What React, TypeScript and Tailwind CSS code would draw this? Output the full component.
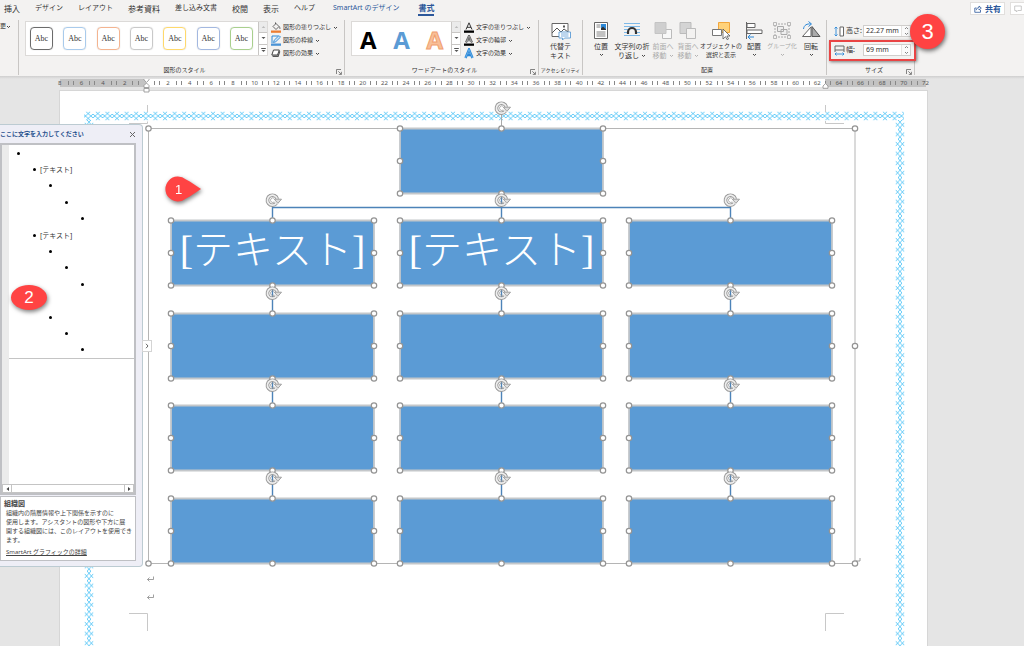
import type { ReactNode } from "react";

const tabs = [
  { name: "挿入", size: "text-[8px]" },
  { name: "デザイン", size: "text-[7px]" },
  { name: "レイアウト", size: "text-[7px]" },
  { name: "参考資料", size: "text-[8px]" },
  { name: "差し込み文書", size: "text-[7px]" },
  { name: "校閲", size: "text-[8px]" },
  { name: "表示", size: "text-[8px]" },
  { name: "ヘルプ", size: "text-[7px]" },
];

const swatches = [
  "border-[#6b6b6b]",
  "border-[#a9cbec]",
  "border-[#f4b490]",
  "border-[#c9c9c9]",
  "border-[#ffd96b]",
  "border-[#a3b8e0]",
  "border-[#a9d08e]",
];

// -8 .. 72, every second mark carries a number
const marks = Array.from({ length: 41 }, (_, i) => i * 2 - 8);

const columns = [171, 400, 629];
const rows = [220, 313, 405, 498];
const NODE_W = 203;
const NODE_H = 66;
const PAGE_X = 60;
const PAGE_Y = 91;

const nodes = [
  { x: 400, y: 128, text: "" },
  ...rows.flatMap((y, r) =>
    columns.map((x, c) => ({ x, y, text: r === 0 && c < 2 ? "[テキスト]" : "" }))
  ),
];

const outline = [
  { level: 0, text: "" },
  { level: 1, text: "[テキスト]" },
  { level: 2, text: "" },
  { level: 3, text: "" },
  { level: 4, text: "" },
  { level: 1, text: "[テキスト]" },
  { level: 2, text: "" },
  { level: 3, text: "" },
  { level: 4, text: "" },
  { level: 1, text: "" },
  { level: 2, text: "" },
  { level: 3, text: "" },
  { level: 4, text: "" },
];

function Chevron() {
  return (
    <svg className="shrink-0" width="5" height="4" viewBox="0 0 5 4" fill="none" stroke="currentColor" strokeWidth="0.9">
      <path d="M1 1l1.5 1.5L4 1" />
    </svg>
  );
}

function Launcher() {
  return (
    <button aria-label="詳細" className="absolute right-[2px] bottom-0">
      <svg width="6" height="6" viewBox="0 0 6 6" fill="none" stroke="#666" strokeWidth="0.8">
        <path d="M.5 5V.5H5M2.3 2.3l3 3M5.4 2.8v2.6H2.8" />
      </svg>
    </button>
  );
}

function Group({ label, className, launcher, small, children }: { label: string; className: string; launcher?: boolean; small?: boolean; children: ReactNode }) {
  return (
    <section className={`relative flex shrink-0 flex-col border-r border-[#c8c6c4] ${className}`}>
      <div className="flex h-[43px] shrink-0 items-start">{children}</div>
      <h2 className={`text-center leading-[12px] whitespace-nowrap ${small ? "text-[5px]" : "text-[6px]"}`}>{label}</h2>
      {launcher && <Launcher />}
    </section>
  );
}

function GalleryScroll() {
  return (
    <div className="flex h-full w-[9px] flex-col border-l border-[#c8c6c4] text-[#555]">
      <button aria-label="上へ" className="flex flex-1 items-center justify-center bg-[#ebebeb] text-[#bbb]">
        <svg width="5" height="4" viewBox="0 0 5 4" fill="currentColor"><path d="M.7 3h3.6L2.5 1z" /></svg>
      </button>
      <button aria-label="下へ" className="flex flex-1 items-center justify-center border-y border-[#c8c6c4]">
        <svg width="5" height="4" viewBox="0 0 5 4" fill="currentColor"><path d="M.5 1h4l-2 2z" /></svg>
      </button>
      <button aria-label="その他" className="flex flex-1 items-center justify-center">
        <svg width="5" height="6" viewBox="0 0 5 6" fill="currentColor"><path d="M.2 1h4.6v.9H.2zM.5 3h4l-2 2z" /></svg>
      </button>
    </div>
  );
}

function MenuButton({ icon, label }: { icon: ReactNode; label: string }) {
  return (
    <button className="flex h-[13px] items-center text-[6px] whitespace-nowrap">
      <svg className="mr-[2px]" width="10" height="11" viewBox="0 0 10 11" fill="none">{icon}</svg>
      {label}
      <span className="ml-[2px]"><Chevron /></span>
    </button>
  );
}

function BigButton({ icon, lines, className, arrow, off, size }: { icon: ReactNode; lines: string[]; className: string; arrow?: boolean; off?: boolean; size?: string }) {
  return (
    <button disabled={off} className={`flex shrink-0 flex-col items-center leading-[9px] whitespace-nowrap ${size ?? "text-[7px]"} ${off ? "text-[#aaa]" : ""} ${className}`}>
      <svg className="mb-px" width="20" height="20" viewBox="0 0 20 20" fill="none">{icon}</svg>
      {lines.map((line, i) => (
        <span key={line} className="flex items-center gap-[2px]">
          {line}
          {arrow && lines.length > 1 && i === lines.length - 1 && <Chevron />}
        </span>
      ))}
      {arrow && lines.length === 1 && <span className="pt-[2px]"><Chevron /></span>}
    </button>
  );
}

function SizeField({ id, label, value, icon }: { id: string; label: string; value: string; icon: ReactNode }) {
  return (
    <div className="flex h-[12px] items-center">
      <svg width="11" height="11" viewBox="0 0 11 11" fill="none">{icon}</svg>
      <label htmlFor={id} className="w-[18px] pl-px text-[7px] whitespace-nowrap">{label}</label>
      <div className="flex h-[12px] w-[48px] border border-[#d0cecc] bg-white">
        <input id={id} defaultValue={value} className="w-[37px] bg-transparent pl-[2px] text-[7px] outline-none" />
        <div className="flex flex-1 flex-col items-center justify-between border-l border-[#e6e4e2] bg-[#fafafa] text-[#777]">
          <button aria-label={`${label}増`} className="rotate-180"><Chevron /></button>
          <button aria-label={`${label}減`}><Chevron /></button>
        </div>
      </div>
    </div>
  );
}

function Ribbon() {
  return (
    <header className="relative z-20 bg-[#f3f2f1] text-[#333]">
      <nav className="flex h-[18px] items-start justify-between">
        <div className="flex gap-[15px] pl-1">
          {tabs.map((tab) => (
            <button key={tab.name} className={`h-[17px] whitespace-nowrap ${tab.size}`}>{tab.name}</button>
          ))}
          <button className="ml-[3px] h-[17px] text-[7px] whitespace-nowrap text-[#2b579a]">SmartArt のデザイン</button>
          <button className="ml-1 h-[16px] border-b-2 border-[#2b579a] pt-[2px] text-[8px] leading-none font-bold text-[#2b579a]">書式</button>
        </div>
        <div className="flex gap-[5px] pt-[2px]">
          <button className="flex h-[13px] w-[35px] items-center justify-center gap-[3px] border border-[#e1dfdd] bg-white text-[8px] font-bold text-[#2b579a]">
            <svg width="8" height="8" viewBox="0 0 8 8" fill="none" stroke="#2b579a" strokeWidth="0.8">
              <path d="M2.5 3H.8v4.3h5.7V5M2.2 5.2C2.5 3.4 3.7 2.6 5 2.6V1l2.3 2.1L5 5V3.8" />
            </svg>
            共有
          </button>
          <button aria-label="コメント" className="flex h-[13px] w-[14px] items-center justify-center border border-r-0 border-[#e1dfdd] bg-white">
            <svg width="8" height="8" viewBox="0 0 8 8" fill="none" stroke="#bbb" strokeWidth="0.8">
              <path d="M.7 1h6.6v4.5H3.8L2.3 7V5.5H.7z" />
            </svg>
          </button>
        </div>
      </nav>

      <div className="flex h-[58px] pt-[2px]">
        <div className="flex h-[55px] w-[19px] border-r border-[#c8c6c4]">
          <button className="flex h-[13px] items-center text-[6px]">
            更
            <Chevron />
          </button>
        </div>

        <Group label="図形のスタイル" className="h-[55px] w-[326px] pt-px pl-[6px]" launcher>
          <div className="flex h-[35px] w-[243px] border border-[#dcdad8] bg-white">
            <div className="flex flex-1 items-center justify-between pr-[5px] pl-1">
              {swatches.map((border) => (
                <button key={border} className={`h-[23px] w-[23px] rounded-[4px] border font-['Liberation_Serif',serif] text-[8px] leading-none shadow-[0_0_1px_rgba(0,0,0,0.25)] ${border}`}>Abc</button>
              ))}
            </div>
            <GalleryScroll />
          </div>
          <div className="flex flex-col pl-[3px]">
            <MenuButton label="図形の塗りつぶし" icon={<><path d="M2 4.5L5 1.5l3 3-3 3zM4.5 2V.4M8 4.5c1 1 1.2 2 .6 2.5" stroke="#444" strokeWidth=".8" /><path d="M0 8.5h10v2.3H0z" fill="#ed7d31" /></>} />
            <MenuButton label="図形の枠線" icon={<><path d="M1 8V1h6" stroke="#2b88d8" /><path d="M2.5 7.5l.7-2.3L8 .6l1.5 1.5-4.7 4.6z" stroke="#2b88d8" strokeWidth=".9" fill="#cfe4f7" /><path d="M0 8.5h10v2.3H0z" fill="#4a93d6" /></>} />
            <MenuButton label="図形の効果" icon={<><path d="M2.5 2h5.8L6.5 7H.8z" fill="#fff" stroke="#444" /><path d="M8.5 2.5l.8 1.3L7.5 9H2L.8 7.5h5.9z" fill="#555" /></>} />
          </div>
        </Group>

        <Group label="ワードアートのスタイル" className="h-[55px] w-[194px] pt-px pl-[6px]" launcher>
          <div className="flex h-[35px] w-[110px] border border-[#dcdad8] bg-white">
            <div className="flex flex-1 items-center justify-between px-2 pt-[2px] font-['Open_Sans',sans-serif] text-[24px] leading-none font-bold">
              <button className="text-black">A</button>
              <button className="text-[#5b9bd5]">A</button>
              <button className="text-[#f8bf98] [-webkit-text-stroke:1px_#f0a070]">A</button>
            </div>
            <GalleryScroll />
          </div>
          <div className="flex flex-col pl-[3px]">
            <MenuButton label="文字の塗りつぶし" icon={<><path d="M2 7.5L5 .8l3 6.7M3 5.3h4" stroke="#333" /><path d="M0 8.5h10v2.3H0z" fill="#000" /></>} />
            <MenuButton label="文字の輪郭" icon={<><path d="M2 7.5L5 .8l3 6.7M3 5.3h4" stroke="#555" strokeWidth="2" /><path d="M2 7.5L5 .8l3 6.7M3 5.3h4" stroke="#ddd" strokeWidth=".5" /><path d="M0 8.5h10v2.3H0z" fill="#000" /></>} />
            <MenuButton label="文字の効果" icon={<><path d="M1.5 10L5 1.5 8.5 10M2.7 7h4.6" stroke="#2b88d8" strokeWidth="2.4" /><path d="M1.5 10L5 1.5 8.5 10" stroke="#9fd0f5" strokeWidth=".5" /></>} />
          </div>
        </Group>

        <Group label="アクセシビリティ" className="h-[55px] w-[44px] pt-px" small>
          <BigButton className="w-full" lines={["代替テ", "キスト"]} icon={<><path d="M1 2.5h16v13H1z" fill="#fff" stroke="#666" /><path d="M1 12l5-5 4 4 3-3 4 3" stroke="#555" /><path d="M12 4.5h2v2h-2z" fill="#555" /><path d="M8 11h11.5v6h-6l-2 2v-2H8z" fill="#fff" stroke="#5b9bd5" strokeWidth=".9" /><path d="M10 13h7.5M10 15h7.5" stroke="#5b9bd5" strokeWidth=".8" /></>} />
        </Group>

        <Group label="配置" className="h-[55px] w-[244px] pt-px pl-[5px]">
          <BigButton className="w-[26px]" arrow lines={["位置"]} icon={<><path d="M3.5 1.5h13v16h-13z" fill="#fff" stroke="#666" /><path d="M5.5 4h4M5.5 6h4M5.5 11h9M5.5 13h9M5.5 15h9" stroke="#777" strokeWidth=".9" /><path d="M10 3h5v6h-5z" fill="#2b88d8" /><path d="M10 9V7.5l2-2 3 3V9z" fill="#333" /></>} />
          <BigButton className="w-[36px]" arrow lines={["文字列の折", "り返し"]} icon={<><path d="M2 2.5h16M2 5.5h16M2 8.5h4M14 8.5h4M2 11.5h3M15 11.5h3M2 14.5h16" stroke="#7db9e8" /><path d="M6 13V11a4 4 0 018 0v2" stroke="#333" strokeWidth="2.2" fill="#f3f2f1" /></>} />
          <BigButton className="w-[26px]" arrow off lines={["前面へ", "移動"]} icon={<><path d="M9.5 8.5h9v9h-9z" fill="#f8f8f8" stroke="#bbb" /><path d="M2 1.5h11v11H2z" fill="#cfcfcf" stroke="#c4c4c4" /></>} />
          <BigButton className="w-[24px]" arrow off lines={["背面へ", "移動"]} icon={<><path d="M2 1.5h11v11H2z" fill="#d4d4d4" stroke="#bbb" /><path d="M8.5 7.5h9v10h-9z" fill="#f3f2f1" stroke="#bbb" /></>} />
          <BigButton className="w-[42px]" size="text-[6px]" lines={["オブジェクトの", "選択と表示"]} icon={<><path d="M7.5 1.5h11v10h-11z" fill="#ffd27a" stroke="#f2a63b" /><path d="M1.5 8.5h9v6h-9z" fill="#fff" stroke="#777" /><path d="M12 8v10l2.5-2.3 1.7 3 1.3-.7-1.6-3H19z" fill="#fff" stroke="#555" strokeWidth=".8" /></>} />
          <BigButton className="w-[24px]" arrow lines={["配置"]} icon={<><path d="M2.5 1v17" stroke="#666" /><path d="M3 2.5h8v4H3zM3 9h15v3.5H3z" fill="#fff" stroke="#666" /><path d="M10 16H4M6.5 13.5L4 16l2.5 2.5" stroke="#2b88d8" /></>} />
          <BigButton className="w-[32px]" size="text-[6px]" arrow off lines={["グループ化"]} icon={<><path d="M3 3h14v13H3z" stroke="#aaa" strokeDasharray="2 1" /><path d="M5.5 5.5h6v5h-6zM9 8.5h6v5H9z" stroke="#aaa" fill="#eee" /><path d="M1.5 1.5h3v3h-3zM15.5 1.5h3v3h-3zM1.5 14.5h3v3h-3zM15.5 14.5h3v3h-3z" fill="#f3f2f1" stroke="#aaa" strokeWidth=".8" /></>} />
          <BigButton className="w-[26px]" arrow lines={["回転"]} icon={<><path d="M1.5 15.5H10V6z" fill="#fff" stroke="#666" /><path d="M11 15.5V5.5l8 10z" fill="#aaa" stroke="#555" /><path d="M2.5 8C3 4 6 2.5 10 3M7.5.5l3 2.5-3 2.5" stroke="#2b88d8" /></>} />
        </Group>

        <Group label="サイズ" className="h-[55px] w-[88px] pt-px pl-[7px]" launcher>
          <div className="flex flex-col gap-[7px] pt-1">
            <SizeField id="height" label="高さ:" value="22.27 mm" icon={<><path d="M2 1v9M.5 2.5L2 1l1.5 1.5M.5 8.5L2 10l1.5-1.5" stroke="#2b88d8" strokeWidth=".9" /><path d="M6 1h3.5v9H6z" stroke="#666" fill="#fff" /></>} />
            <SizeField id="width" label="幅:" value="69 mm" icon={<><path d="M1 1h9v4H1zM1 5v2M10 5v2" stroke="#666" /><path d="M1 9h9M2.5 7.5L1 9l1.5 1.5M8.5 7.5L10 9l-1.5 1.5" stroke="#2b88d8" strokeWidth=".9" /></>} />
          </div>
        </Group>
      </div>
      <div className="absolute top-full left-0 h-[3px] w-full bg-linear-to-b from-[#cfcfcf] to-[#e5e5e5]" />

      <div className="absolute top-[40px] left-[829px] h-[21px] w-[87px] border-2 border-[#e94444] shadow-[1px_1px_3px_rgba(0,0,0,0.5)]" />
      <span className="absolute top-[14px] left-[910px] flex h-[35px] w-[35px] items-center justify-center rounded-full bg-[#ff4343] font-['Liberation_Sans',sans-serif] text-[22px] text-white shadow-[1px_2px_4px_rgba(0,0,0,0.55)]">3</span>
    </header>
  );
}

function Ruler() {
  return (
    <div className="relative mt-[3px] h-[8px] w-[936px] shrink-0 overflow-hidden pl-[49px]">
      <div className="absolute inset-y-0 left-[60px] w-[866px] border-r-[101px] border-l-[86px] border-[#c3c3c3] bg-white" />
      <div className="relative flex h-full items-center text-[6px] leading-none text-[#555]">
        {marks.map((n) => (
          <span key={n} className="flex flex-1 items-center justify-around">
            <i className={n === -8 ? "w-px" : "h-1 w-px bg-[#888]"} />
            <span className="w-[7px] text-center">{n === 0 ? "" : Math.abs(n)}</span>
            <i className={n === 72 ? "w-px" : "h-1 w-px bg-[#888]"} />
          </span>
        ))}
      </div>
    </div>
  );
}

function Rotate({ x, y }: { x: number; y: number }) {
  return (
    <g transform={`translate(${x} ${y})`} fill="none">
      <path d="M3.8 3.4A5 5 0 114.8-1" stroke="#999" strokeWidth="3.6" />
      <path d="M3.8 3.4A5 5 0 114.8-1" stroke="#eee" strokeWidth="1.7" />
      <path d="M1.8-.8h7.2L5.4 3.4z" fill="#ddd" stroke="#999" strokeWidth=".9" />
      <path d="M1.8 1.9A2.3 2.3 0 111.5-1.8" stroke="#999" strokeWidth=".8" />
    </g>
  );
}

function Handle({ x, y }: { x: number; y: number }) {
  return <circle cx={x} cy={y} r="2.7" fill="#fff" stroke="#949494" strokeWidth="1.2" />;
}

function Selection() {
  return (
    <svg className="absolute top-0 left-0" width="867" height="555" viewBox="60 91 867 555" fill="none">
      {nodes.map(({ x, y }) => {
        const mid = x + NODE_W / 2;
        const top = y + 0.5;
        const bottom = y + NODE_H - 0.5;
        return (
          <g key={`${x}-${y}`}>
            <path d={`M${x} ${top}h${NODE_W}V${bottom}H${x}z`} stroke="#c4c7ca" strokeWidth="1.8" />
            {y === 128 && <path d={`M${mid} 112V${top}`} stroke="#aaa" />}
            {[x, mid, x + NODE_W].map((hx) => <Handle key={hx} x={hx} y={top} />)}
            <Handle x={x} y={y + NODE_H / 2} />
            <Handle x={x + NODE_W} y={y + NODE_H / 2} />
            {[x, mid, x + NODE_W].map((hx) => <Handle key={hx} x={hx} y={bottom} />)}
          </g>
        );
      })}
      {nodes.map(({ x, y }) => (
        <Rotate key={`${x}-${y}`} x={x + NODE_W / 2} y={y - 20} />
      ))}
      <Handle x={148.5} y={128.5} />
      <Handle x={855} y={128.5} />
      <Handle x={855} y={346} />
      <Handle x={148.5} y={563.5} />
      <Handle x={855} y={563.5} />
    </svg>
  );
}

function PageArt() {
  return (
    <svg className="absolute top-0 left-0" width="867" height="555" viewBox="60 91 867 555" fill="none">
      <defs>
        <pattern id="stitch-h" x="93" y="111" width="9.6" height="10" patternUnits="userSpaceOnUse">
          <path d="M2.8.8L9.6 6.9M6.8.8L0 6.9M2.8 9.2L9.6 3.1M6.8 9.2L0 3.1" stroke="#45c1f7" strokeWidth=".8" />
        </pattern>
        <pattern id="stitch-v" x="0" y="120" width="10" height="9.6" patternUnits="userSpaceOnUse">
          <path d="M.8 2.8L6.9 9.6M.8 6.8L6.9 0M9.2 2.8L3.1 9.6M9.2 6.8L3.1 0" stroke="#45c1f7" strokeWidth=".8" />
        </pattern>
      </defs>
      <rect x="84" y="111" width="820" height="10" fill="url(#stitch-h)" />
      <g transform="translate(84 0)"><rect x="0" y="120" width="10" height="530" fill="url(#stitch-v)" /></g>
      <g transform="translate(895 0)"><rect x="0" y="120" width="10" height="530" fill="url(#stitch-v)" /></g>
      <path d="M147.5 105v7M129 123.5h18.5v-2M825.5 105v7M825.5 121v2.5H844M129 613.5h18.5V631M844 613.5h-18.5V631" stroke="#c8c8c8" />
      <path d="M148.5 128.5H855v435H148.5z" stroke="#b5b5b5" />
      <g stroke="#4d83b8" strokeWidth="1.4">
        <path d="M272.5 220v-12.5h458V220M501.5 194v26" />
        {columns.map((x) => <path key={x} d={`M${x + 101.5} 286V498`} />)}
      </g>
      <g stroke="#888" strokeWidth=".8">
        <path d="M153.5 576.5v3h-6M149.5 577.5l-2 2 2 2M153.5 594.5v3h-6M149.5 595.5l-2 2 2 2M860 558v3h-4" />
      </g>
    </svg>
  );
}

function TextPane() {
  return (
    <aside className="absolute top-[37px] left-0 z-10 flex h-[443px] w-[143px] flex-col rounded-r-[4px] border border-l-0 border-[#bccbd2] bg-[#eeeef6] pr-[6px] pb-[5px]">
      <div className="flex h-[18px] items-center justify-between">
        <h2 className="text-[6px] font-bold whitespace-nowrap text-[#1f4e8c]">ここに文字を入力してください</h2>
        <button aria-label="閉じる">
          <svg width="7" height="7" viewBox="0 0 7 7" stroke="#666" strokeWidth="1"><path d="M1 1l5 5M6 1L1 6" /></svg>
        </button>
      </div>
      <div className="flex flex-1 flex-col border-2 border-[#bfc0c4] bg-white">
        <div className="flex flex-1 flex-col border-l-[7px] border-[#ebebeb]">
          <ul className="flex h-[214px] flex-col border-b border-[#c4c4c4] pl-2 text-[7px] leading-none text-[#333]">
            {outline.map((item, i) => (
              <li key={i} className="flex flex-1 items-center gap-1" style={{ paddingLeft: item.level * 16 }}>
                <span className="size-[3px] rounded-full bg-black" />
                {item.text}
              </li>
            ))}
          </ul>
        </div>
        <div className="flex h-[9px] justify-between border border-[#c4c4c4]">
          <button aria-label="左へ" className="flex w-[9px] items-center justify-center border-r border-[#c4c4c4]">
            <svg width="3" height="4" viewBox="0 0 3 4" fill="#444"><path d="M3 0v4L.5 2z" /></svg>
          </button>
          <button aria-label="右へ" className="flex w-[9px] items-center justify-center border-l border-[#c4c4c4]">
            <svg width="3" height="4" viewBox="0 0 3 4" fill="#444"><path d="M0 0v4l2.5-2z" /></svg>
          </button>
        </div>
      </div>
      <div className="mt-px h-[65px] border border-[#bfc0c4] bg-white pt-[2px] pl-[3px] text-[6px] leading-[9px] whitespace-nowrap text-[#444]">
        <h3 className="text-[7px] font-bold">組織図</h3>
        <p className="pt-px pl-[2px]">
          組織内の階層情報や上下関係を示すのに<br />
          使用します。アシスタントの図形や下方に展<br />
          開する組織図には、このレイアウトを使用でき<br />
          ます。
        </p>
        <a href="#details" className="mt-[3px] ml-[2px] block underline">SmartArt グラフィックの詳細</a>
      </div>
    </aside>
  );
}

export default function App() {
  return (
    <div className="flex h-screen flex-col overflow-hidden bg-[#e5e5e5] font-['Noto_Sans','Noto_Sans_CJK_JP',sans-serif]">
      <Ribbon />
      <Ruler />

      <main className="relative flex-1 pt-1">
        <div className="relative ml-[60px] h-full w-[867px] bg-white shadow-[0_0_0_1px_#d6d6d6]">
          <PageArt />
          {nodes.map((node) => (
            <div
              key={`${node.x}-${node.y}`}
              className="absolute flex h-[66px] w-[203px] items-center justify-center bg-[#5b9bd5] pb-1 font-['Liberation_Serif','Noto_Sans_CJK_JP',serif] text-[40px] leading-none font-light whitespace-nowrap text-white"
              style={{ left: node.x - PAGE_X, top: node.y - PAGE_Y }}
            >
              {node.text}
            </div>
          ))}
          <Selection />
        </div>

        <svg className="absolute -top-[10px] left-[143px]" width="7" height="17" viewBox="0 0 7 17" fill="#fff" stroke="#999" strokeWidth=".9">
          <path d="M1 .8h5v2L3.5 5.5 1 2.8zM3.5 6L6 8.5v2H1v-2zM1 11.5h5v3.5H1z" />
        </svg>
        <svg className="absolute -top-1 left-[822px]" width="7" height="6" viewBox="0 0 7 6" fill="#fff" stroke="#999" strokeWidth=".9">
          <path d="M3.5.6L6 3v2.3H1V3z" />
        </svg>

        <TextPane />
        <button aria-label="テキスト ウィンドウ" className="absolute top-[253px] left-[142px] z-10 flex h-[12px] w-[10px] items-center justify-center border border-[#d4d4d4] bg-white">
          <svg width="4" height="6" viewBox="0 0 4 6" fill="none" stroke="#666"><path d="M1 .8L3 3 1 5.2" /></svg>
        </button>

        <div className="absolute top-[88px] left-[163px] z-10 flex h-[28px] w-[42px] items-center text-white drop-shadow-[1px_2px_2px_rgba(0,0,0,0.5)]">
          <svg className="absolute inset-0" width="42" height="28" viewBox="0 0 42 28" fill="#ff4343">
            <path d="M38 14C33 11 28 7 23 4.500A12.500 12.500 0 1 0 23 23.500C28 21 33 17 38 14z" />
          </svg>
          <span className="relative ml-3 font-['Liberation_Sans',sans-serif] text-[13px] leading-none">1</span>
        </div>
        <span className="absolute top-[198px] left-[11px] z-10 flex h-[25px] w-[36px] items-center justify-center rounded-[50%] bg-[#ff4343] font-['Liberation_Sans',sans-serif] text-[17px] text-white shadow-[1px_2px_4px_rgba(0,0,0,0.5)]">2</span>
      </main>
    </div>
  );
}
